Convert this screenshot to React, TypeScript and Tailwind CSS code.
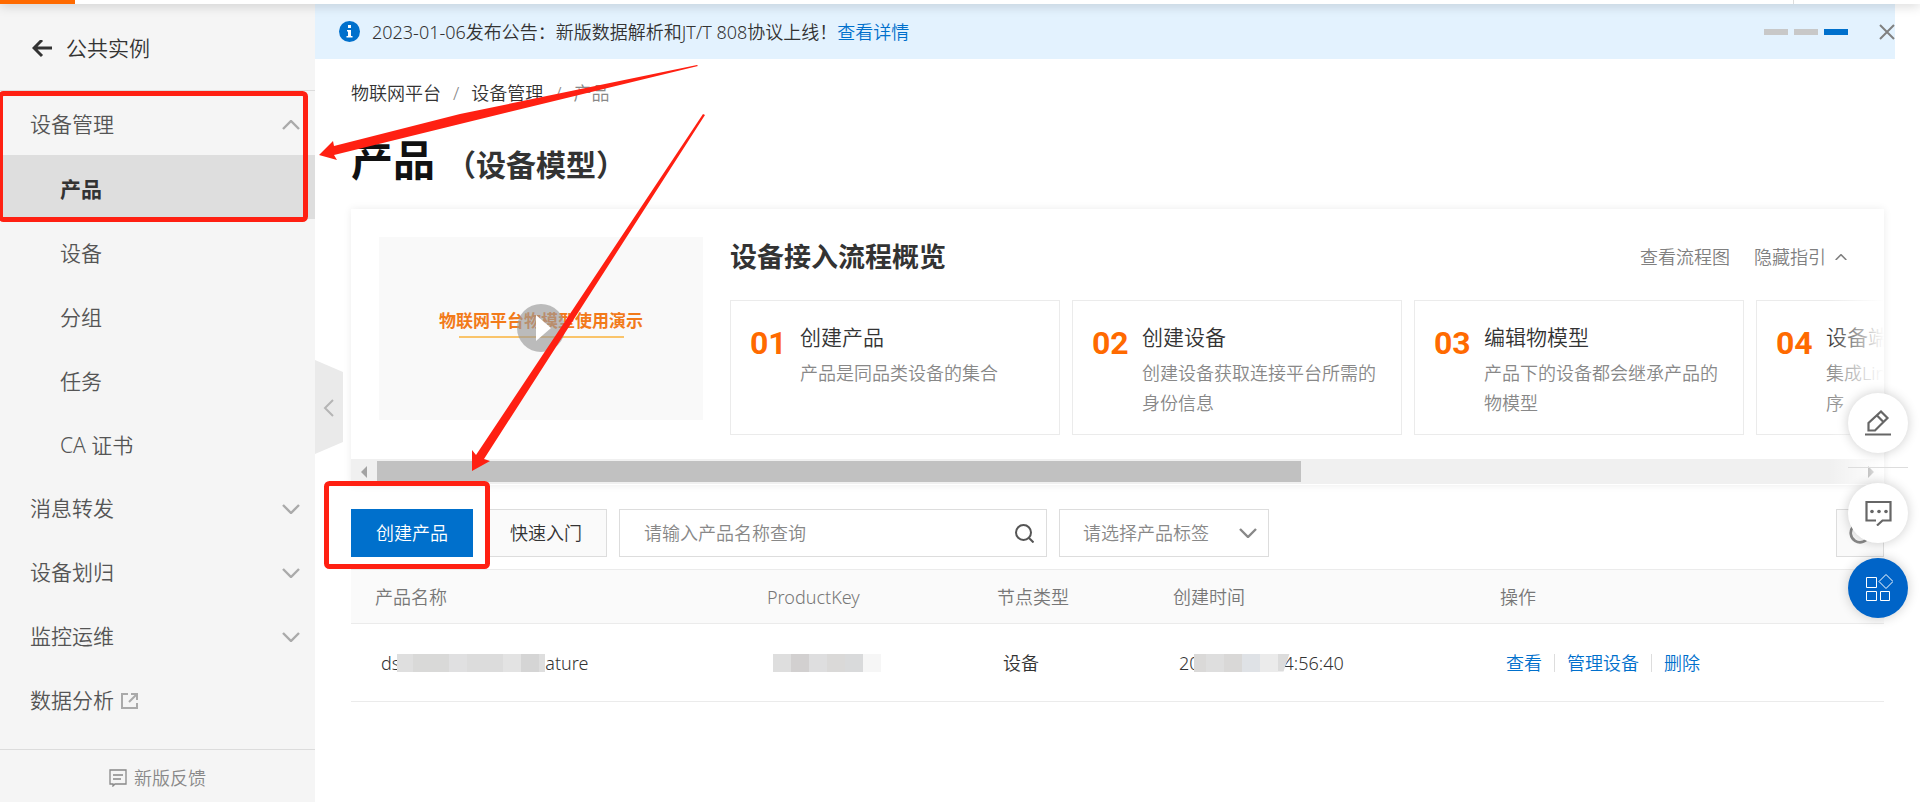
import type { ReactNode } from "react";
import clsx from "clsx";

type MenuItem = {
  label: string;
  children?: string[];
  external?: boolean;
};

const menu: MenuItem[] = [
  { label: "设备管理", children: ["产品", "设备", "分组", "任务", "CA 证书"] },
  { label: "消息转发", children: [] },
  { label: "设备划归", children: [] },
  { label: "监控运维", children: [] },
  { label: "数据分析", external: true },
];

const steps = [
  { no: "01", title: "创建产品", text: "产品是同品类设备的集合" },
  { no: "02", title: "创建设备", text: "创建设备获取连接平台所需的身份信息" },
  { no: "03", title: "编辑物模型", text: "产品下的设备都会继承产品的物模型" },
  { no: "04", title: "设备端开发", text: "集成Link SDK开发设备端的程序" },
];

type ChevronProps = {
  className?: string;
  direction?: "up" | "down" | "left";
};

function Chevron({ className, direction = "down" }: ChevronProps) {
  const points = {
    up: "1,9 9,1 17,9",
    down: "1,1 9,9 17,1",
    left: "9,1 1,9 9,17",
  };
  return (
    <svg
      viewBox={direction === "left" ? "0 0 10 18" : "0 0 18 10"}
      className={className}
      fill="none"
      stroke="currentColor"
      strokeWidth="2.4"
    >
      <polyline points={points[direction]} />
    </svg>
  );
}

function Sidebar() {
  return (
    <aside className="relative flex w-[315px] shrink-0 flex-col bg-[#f5f5f5] text-[21px] text-[#555]">
      <a
        href="#"
        className="flex h-[87px] items-center gap-[14px] border-b border-[#dcdcdc] pt-1 pl-8 text-[#333]"
      >
        <svg
          viewBox="0 0 20 18"
          className="h-[18px] w-5"
          fill="none"
          stroke="currentColor"
          strokeWidth="3"
        >
          <path d="M20 8H2M10 0 2 8l8 8" />
        </svg>
        公共实例
      </a>
      <nav className="flex-1">
        {menu.map((item) => (
          <div key={item.label}>
            <a
              href="#"
              className="flex h-16 items-center justify-between pt-1 pl-[30px] pr-[15px]"
            >
              <span className="flex items-center gap-[7px]">
                {item.label}
                {item.external ? (
                  <svg
                    viewBox="0 0 17 16"
                    className="h-4 w-[17px] text-[#aaa]"
                    fill="none"
                    stroke="currentColor"
                    strokeWidth="2"
                  >
                    <path d="M7 1H1v14h15v-5M10 1h6v6M15 2 8 9" />
                  </svg>
                ) : null}
              </span>
              {item.children ? (
                <Chevron
                  className="w-[18px] text-[#aaa]"
                  direction={item.children.length > 0 ? "up" : "down"}
                />
              ) : null}
            </a>
            {item.children?.map((child) => (
              <a
                key={child}
                href="#"
                className={clsx(
                  "flex h-16 items-center pt-[6px] pl-[60px]",
                  child === "产品" && "bg-[#dedede] font-bold text-[#333]",
                )}
              >
                {child}
              </a>
            ))}
          </div>
        ))}
      </nav>
      <a
        href="#"
        className="flex h-[53px] items-center justify-center gap-[7px] border-t border-[#dcdcdc] pt-1 text-lg text-[#888]"
      >
        <svg
          viewBox="0 0 18 18"
          className="size-[18px]"
          fill="none"
          stroke="currentColor"
          strokeWidth="1.3"
        >
          <path d="M1 1h16v14H6l-2 2v-2H1zM4 6h10M4 10h8" />
        </svg>
        新版反馈
      </a>
      <button
        aria-label="收起菜单"
        className="absolute top-[356px] left-full h-[94px] w-7 text-[#b5b5b5]"
      >
        <svg viewBox="0 0 28 94" fill="none">
          <path d="M0 0 28 12V82L0 94z" fill="#eaeaea" />
          <path d="M18 40 10 48l8 8" stroke="currentColor" strokeWidth="2" />
        </svg>
      </button>
    </aside>
  );
}

function Notice() {
  return (
    <div className="flex h-[55px] items-center bg-[#e3f2fe] pl-6 text-lg text-[#333]">
      <svg viewBox="0 0 21 21" className="mr-3 size-[21px]">
        <circle cx="10.5" cy="10.5" r="10.5" fill="#0070cc" />
        <path
          d="M9 4h3v3H9zM8 9h4v6h1.500v1.500H7.500V15H9v-4.500H8z"
          fill="#fff"
        />
      </svg>
      <p className="flex-1">
        2023-01-06发布公告：新版数据解析和JT/T 808协议上线！
        <a href="#" className="text-[#0070cc]">
          查看详情
        </a>
      </p>
      <div className="flex gap-[6px]">
        <span className="h-[6px] w-6 bg-[#c8c8c8]" />
        <span className="h-[6px] w-6 bg-[#c8c8c8]" />
        <span className="h-[6px] w-6 bg-[#0070cc]" />
      </div>
      <button aria-label="关闭" className="ml-[31px] text-[#808080]">
        <svg
          viewBox="0 0 16 16"
          className="size-4"
          stroke="currentColor"
          strokeWidth="2"
        >
          <path d="m1 1 14 14M15 1 1 15" />
        </svg>
      </button>
    </div>
  );
}

function Guide() {
  return (
    <section className="relative mt-[21px] overflow-hidden bg-white shadow-[0_0_8px_rgba(0,0,0,0.08)]">
      <div className="flex gap-[27px] pt-7 pl-7">
        <div className="relative flex h-[183px] w-[324px] shrink-0 flex-col items-center justify-center bg-[#f9f9f9] pb-[10px]">
          <p className="text-[17px] leading-6 font-bold whitespace-nowrap text-[#f27a1a]">
            物联网平台物模型使用演示
          </p>
          <span className="mt-[3px] h-[2px] w-[165px] bg-[#fac46a]" />
          <button
            aria-label="播放"
            className="absolute top-[67px] left-[138px] size-12"
          >
            <svg viewBox="0 0 48 48">
              <circle cx="24" cy="24" r="24" fill="#999" fillOpacity="0.65" />
              <path d="M19 11v26l15-13z" fill="#fff" />
            </svg>
          </button>
        </div>
        <div className="min-w-0 flex-1">
          <div className="flex h-[63px] items-start pr-[37px] text-lg text-[#808080]">
            <h2 className="flex-1 text-[27px] leading-10 font-bold text-[#333]">
              设备接入流程概览
            </h2>
            <a href="#" className="mr-6 leading-10">
              查看流程图
            </a>
            <button className="flex items-center gap-[9px] leading-10">
              隐藏指引
              <Chevron className="w-3" direction="up" />
            </button>
          </div>
          <ol className="flex gap-3">
            {steps.map((step) => (
              <li
                key={step.no}
                className="flex h-[135px] w-[330px] shrink-0 border border-[#ebebeb] pt-5 pl-[19px]"
              >
                <span className="w-[50px] font-[Roboto,sans-serif] text-[32px] leading-[44px] font-bold text-[#ff6a00]">
                  {step.no}
                </span>
                <div className="w-[240px]">
                  <h3 className="text-[21px] leading-8 text-[#333]">
                    {step.title}
                  </h3>
                  <p className="mt-[5px] text-lg leading-[30px] text-[#888]">
                    {step.text}
                  </p>
                </div>
              </li>
            ))}
          </ol>
        </div>
      </div>
      <div className="mt-6 mb-px flex h-[25px] items-center bg-[#f0f0f0] px-[10px]">
        <svg viewBox="0 0 6 12" className="mr-[10px] h-3 w-[6px]">
          <path d="M6 0v12L0 6z" fill="#a3a3a3" />
        </svg>
        <div className="flex-1">
          <div className="h-[21px] w-[62%] bg-[#c1c1c1]" />
        </div>
        <svg viewBox="0 0 6 12" className="h-3 w-[6px]">
          <path d="M0 0v12l6-6z" fill="#303030" />
        </svg>
      </div>
      <div className="absolute top-[90px] right-0 bottom-0 w-14 bg-linear-to-l from-white to-white/0" />
    </section>
  );
}

function Toolbar() {
  return (
    <div className="mt-6 flex h-12 gap-3 text-lg">
      <button className="w-[122px] bg-[#0070cc] text-white">创建产品</button>
      <button className="w-[122px] border border-[#ddd] bg-[#fafafa] text-[#333]">
        快速入门
      </button>
      <div className="flex w-[428px] items-center border border-[#ddd] pr-3 pl-6">
        <input
          type="text"
          aria-label="产品名称"
          placeholder="请输入产品名称查询"
          className="min-w-0 flex-1 outline-none placeholder:text-[#888]"
        />
        <button aria-label="搜索" className="text-[#555]">
          <svg
            viewBox="0 0 19 19"
            className="size-[19px]"
            fill="none"
            stroke="currentColor"
            strokeWidth="2"
          >
            <circle cx="8.500" cy="8.500" r="7.500" />
            <path d="m13.500 13.500 5 5" />
          </svg>
        </button>
      </div>
      <div className="relative w-[210px]">
        <select
          aria-label="产品标签"
          className="size-full appearance-none border border-[#ddd] bg-white pl-[23px] text-[#888]"
        >
          <option>请选择产品标签</option>
        </select>
        <Chevron className="pointer-events-none absolute top-[19px] right-3 w-[18px] text-[#888]" />
      </div>
      <button
        aria-label="刷新"
        className="ml-auto flex w-12 items-center justify-center border border-[#ddd] bg-[#fafafa] text-[#888]"
      >
        <svg
          viewBox="0 0 20 20"
          className="size-[22px]"
          fill="none"
          stroke="currentColor"
          strokeWidth="2.4"
        >
          <path d="M17 5a8.500 8.500 0 1 0 1 8M18 1v5h-5" />
        </svg>
      </button>
    </div>
  );
}

// Pixelated block that hides a part of a value.
function Mosaic({ children }: { children: ReactNode }) {
  return <span className="relative flex h-[18px]">{children}</span>;
}

function ProductTable() {
  return (
    <table className="mt-3 w-full table-fixed border-y border-[#ebebeb] text-left text-lg text-[#333]">
      <colgroup>
        <col className="w-[392px]" />
        <col className="w-[230px]" />
        <col className="w-[176px]" />
        <col className="w-[327px]" />
        <col />
      </colgroup>
      <thead>
        <tr className="h-[54px] border-b border-[#ebebeb] bg-[#fafafa] text-[#777]">
          <th className="pl-6 font-[350]">产品名称</th>
          <th className="pl-6 font-[350]">ProductKey</th>
          <th className="pl-6 font-[350]">节点类型</th>
          <th className="pl-6 font-[350]">创建时间</th>
          <th className="pl-6 font-[350]">操作</th>
        </tr>
      </thead>
      <tbody>
        <tr className="h-[78px]">
          <td className="pl-[30px]">
            <div className="flex items-center">
              ds
              <Mosaic>
                <i className="-ml-[3px] w-4 bg-[#dfdfdf]" />
                <i className="w-9 bg-[#d9d9d8]" />
                <i className="w-[18px] bg-[#e0e0e1]" />
                <i className="w-9 bg-[#dcdcdc]" />
                <i className="w-[18px] bg-[#e3e3e3]" />
                <i className="w-[18px] bg-[#d5d5d5]" />
                <i className="w-[6px] bg-[#dedede]" />
              </Mosaic>
              ature
            </div>
          </td>
          <td className="pl-[30px]">
            <Mosaic>
              <i className="w-[18px] bg-[#dedede]" />
              <i className="w-[18px] bg-[#d2d0d0]" />
              <i className="w-[18px] bg-[#dededf]" />
              <i className="w-[18px] bg-[#dad9d8]" />
              <i className="w-[18px] bg-[#d9dadb]" />
              <i className="w-[18px] bg-[#f6f6f6]" />
            </Mosaic>
          </td>
          <td className="pl-[30px]">设备</td>
          <td className="pl-[30px]">
            <div className="flex items-center">
              20
              <Mosaic>
                <i className="-ml-[6px] w-[12px] bg-[#dad9d8]" />
                <i className="w-[18px] bg-[#dedede]" />
                <i className="w-[18px] bg-[#d9d8d7]" />
                <i className="w-[18px] bg-[#dfe2e6]" />
                <i className="w-[18px] bg-[#ebebeb]" />
                <i className="w-[12px] bg-[#dcdcdc] [clip-path:polygon(0_0,100%_0,50%_100%,0_100%)]" />
              </Mosaic>
              <span className="-ml-[6px]">4:56:40</span>
            </div>
          </td>
          <td className="pl-[30px] text-[#0070cc]">
            <div className="flex items-center gap-3">
              <a href="#">查看</a>
              <span className="h-[18px] w-px bg-[#ddd]" />
              <a href="#">管理设备</a>
              <span className="h-[18px] w-px bg-[#ddd]" />
              <a href="#">删除</a>
            </div>
          </td>
        </tr>
      </tbody>
    </table>
  );
}

type FloatButtonProps = {
  label: string;
  className: string;
  children: ReactNode;
};

function FloatButton({ label, className, children }: FloatButtonProps) {
  return (
    <button
      aria-label={label}
      className={clsx(
        "flex size-[60px] items-center justify-center rounded-full shadow-[0_0_12px_rgba(0,0,0,0.2)]",
        className,
      )}
    >
      {children}
    </button>
  );
}

function FloatBar() {
  return (
    <div className="fixed top-[393px] right-3 flex flex-col">
      <FloatButton label="编辑" className="bg-white text-[#666]">
        <svg
          viewBox="0 0 26 26"
          className="size-[26px]"
          fill="none"
          stroke="currentColor"
          strokeWidth="2.2"
        >
          <path d="M0 24.500h26M3.500 20.500V13L16 1.500l6.500 6.500L10 20.500zM12 5.500l6.500 6.500" />
        </svg>
      </FloatButton>
      <span className="mt-[14px] mb-[15px] h-px bg-[#ddd]" />
      <FloatButton label="咨询" className="bg-white text-[#666]">
        <svg
          viewBox="0 0 27 26"
          className="h-[26px] w-[27px]"
          fill="none"
          stroke="currentColor"
          strokeWidth="2.2"
        >
          <path d="M11 20.500H1.500v-18.500h24v18.500h-8l-5.500 5" />
          <g fill="currentColor" stroke="none">
            <circle cx="7" cy="11.500" r="1.800" />
            <circle cx="14" cy="11.500" r="1.800" />
            <circle cx="21" cy="11.500" r="1.800" />
          </g>
        </svg>
      </FloatButton>
      <FloatButton label="应用" className="mt-[15px] bg-[#0064c8] text-white">
        <svg
          viewBox="0 2 29 29"
          className="size-[29px]"
          fill="none"
          stroke="currentColor"
        >
          <path d="M2.500 5.500h10v10h-10zM2.500 19.500h10v9h-10zM16.500 19.500h9v9h-9zM22 2.500l7 7-7 7-7-7z" />
        </svg>
      </FloatButton>
    </div>
  );
}

// Red boxes and arrows that point out the steps to take.
function Annotations() {
  return (
    <svg
      width="720"
      height="600"
      viewBox="0 0 720 600"
      className="pointer-events-none absolute top-0 left-0"
      fill="none"
      stroke="#ff2012"
      strokeWidth="5"
    >
      <rect x="0.500" y="93.500" width="305" height="126" rx="3" />
      <rect x="326.500" y="483.500" width="161" height="83" rx="3" />
      <g fill="#ff2012" stroke="none">
        <path d="M319 155 333 141 334 146 460 114 697 65 698 66 460 124 334 155 337 160z" />
        <path d="M472 471 472 450 476 455 703 114 705 115 484 459 490 461z" />
      </g>
    </svg>
  );
}

export default function App() {
  return (
    <div className="relative flex min-h-screen flex-col bg-white font-['Noto_Sans','Noto_Sans_CJK_SC',sans-serif] font-[350]">
      <header className="relative z-10 flex h-1 bg-white shadow-[0_0_12px_rgba(0,0,0,0.35)]">
        <span className="w-[75px] bg-[#ff6a00]" />
        <span className="mr-[126px] ml-auto w-px bg-[#ddd]" />
      </header>
      <div className="flex flex-1">
        <Sidebar />
        <main className="min-w-0 flex-1 pr-[25px]">
          <Notice />
          <div className="pr-[11px] pl-9">
            <nav className="mt-[21px] flex gap-3 text-lg leading-[27px] text-[#333]">
              <a href="#">物联网平台</a>
              <span className="text-[#888]">/</span>
              <a href="#">设备管理</a>
              <span className="text-[#888]">/</span>
              <span className="text-[#888]">产品</span>
            </nav>
            <h1 className="mt-[26px] flex h-[55px] items-baseline gap-[11px] text-[42px] leading-[54px] font-bold text-[#111]">
              产品
              <span className="text-[30px] text-[#333]">（设备模型）</span>
            </h1>
            <Guide />
            <Toolbar />
            <ProductTable />
          </div>
        </main>
      </div>
      <FloatBar />
      <Annotations />
    </div>
  );
}
